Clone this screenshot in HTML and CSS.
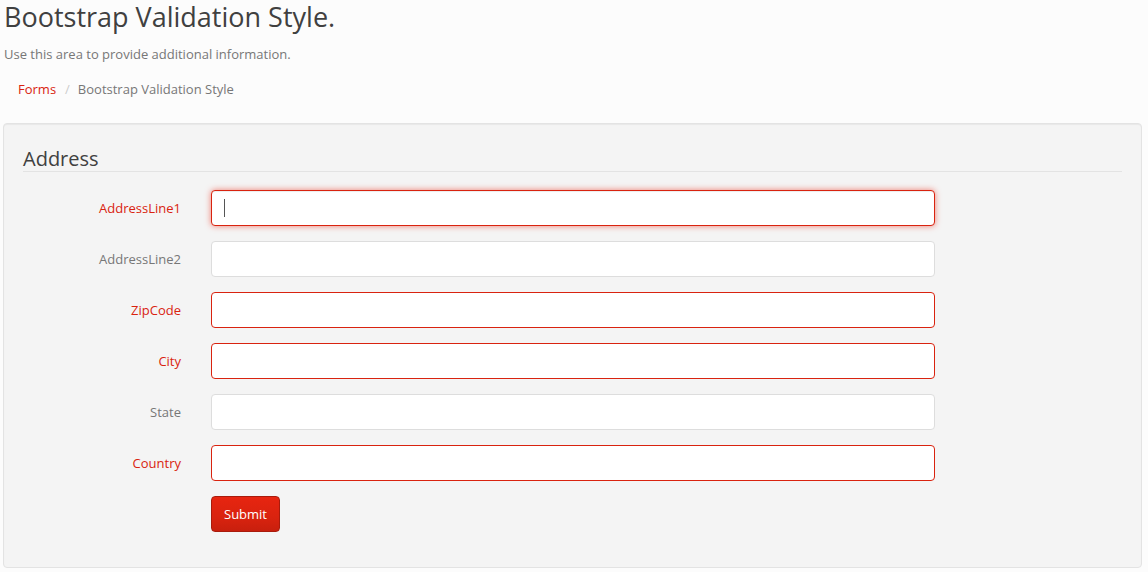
FILE: index.html
```html
<!DOCTYPE html>
<html>
<head>
<meta charset="utf-8">
<link rel="stylesheet" href="styles.css">
</head>
<body>
<div class="page">
  <h1 class="title">Bootstrap Validation Style.</h1>
  <p class="lead">Use this area to provide additional information.</p>
  <ol class="breadcrumb">
    <li><a href="#">Forms</a></li>
    <li class="active">Bootstrap Validation Style</li>
  </ol>
  <div class="well">
    <form class="form">
      <div class="legend">Address</div>
      <div class="row error">
        <label class="label">AddressLine1</label>
        <div class="control"><input class="input focus" type="text"><span class="caret"></span></div>
      </div>
      <div class="row">
        <label class="label">AddressLine2</label>
        <div class="control"><input class="input" type="text"></div>
      </div>
      <div class="row error">
        <label class="label">ZipCode</label>
        <div class="control"><input class="input" type="text"></div>
      </div>
      <div class="row error">
        <label class="label">City</label>
        <div class="control"><input class="input" type="text"></div>
      </div>
      <div class="row">
        <label class="label">State</label>
        <div class="control"><input class="input" type="text"></div>
      </div>
      <div class="row error">
        <label class="label">Country</label>
        <div class="control"><input class="input" type="text"></div>
      </div>
      <div class="row">
        <div class="label"></div>
        <div class="control"><button class="btn" type="button">Submit</button></div>
      </div>
    </form>
  </div>
</div>
</body>
</html>
```
FILE: styles.css
```css
html, body {
  margin: 0;
  padding: 0;
  background: #fcfcfc;
}
body {
  font-family: "Open Sans", "Liberation Sans", sans-serif;
  font-size: 13px;
  color: #777777;
}
.page {
  padding: 0 6px 0 3px;
}
.title {
  font-size: 27px;
  font-weight: 400;
  color: #404040;
  line-height: 1.1;
  margin: 2px 0 0 1px;
}
.lead {
  margin: 13px 0 0 1px;
  line-height: 18px;
}
.breadcrumb {
  list-style: none;
  display: flex;
  margin: 9px 0 16px 0;
  padding: 8px 15px;
  line-height: 19px;
}
.breadcrumb li + li::before {
  content: "/";
  color: #cccccc;
  padding: 0 8px 0 9px;
}
.breadcrumb a {
  color: #d9230f;
  text-decoration: none;
}
.breadcrumb .active {
  color: #777777;
}
.well {
  background: #f4f4f4;
  border: 1px solid #e3e3e3;
  border-radius: 4px;
  box-shadow: inset 0 1px 1px rgba(0,0,0,0.05);
  padding: 19px;
  min-height: 445px;
  box-sizing: border-box;
}
.legend {
  font-size: 20px;
  color: #404040;
  line-height: 25px;
  border-bottom: 1px solid #e3e3e3;
  margin: 0 0 18px 0;
  padding-top: 3px;
  padding-bottom: 0;
}
.row {
  display: flex;
  align-items: center;
  margin-bottom: 15px;
}
.label {
  width: 158px;
  flex: none;
  padding-right: 15px;
  text-align: right;
  color: #777777;
}
.control {
  width: 724px;
  flex: none;
  padding-left: 15px;
  position: relative;
}
.input {
  display: block;
  width: 100%;
  height: 36px;
  box-sizing: border-box;
  border: 1px solid #dddddd;
  border-radius: 4px;
  background: #ffffff;
  font: inherit;
  padding: 8px 12px;
  outline: none;
}
.error .label {
  color: #d9230f;
}
.error .input {
  border-color: #d9230f;
}
.input.focus {
  box-shadow: inset 0 1px 1px rgba(0,0,0,0.075), 0 0 6px #f07c6f;
}
.caret {
  position: absolute;
  left: 28px;
  top: 9px;
  width: 1px;
  height: 18px;
  background: #555555;
}
.btn {
  font: inherit;
  color: #ffffff;
  height: 36px;
  padding: 0 12px;
  border: 1px solid #a91b0c;
  border-radius: 4px;
  background: linear-gradient(#e72510, #d9230f 60%, #c81f0d);
  cursor: pointer;
}
```
